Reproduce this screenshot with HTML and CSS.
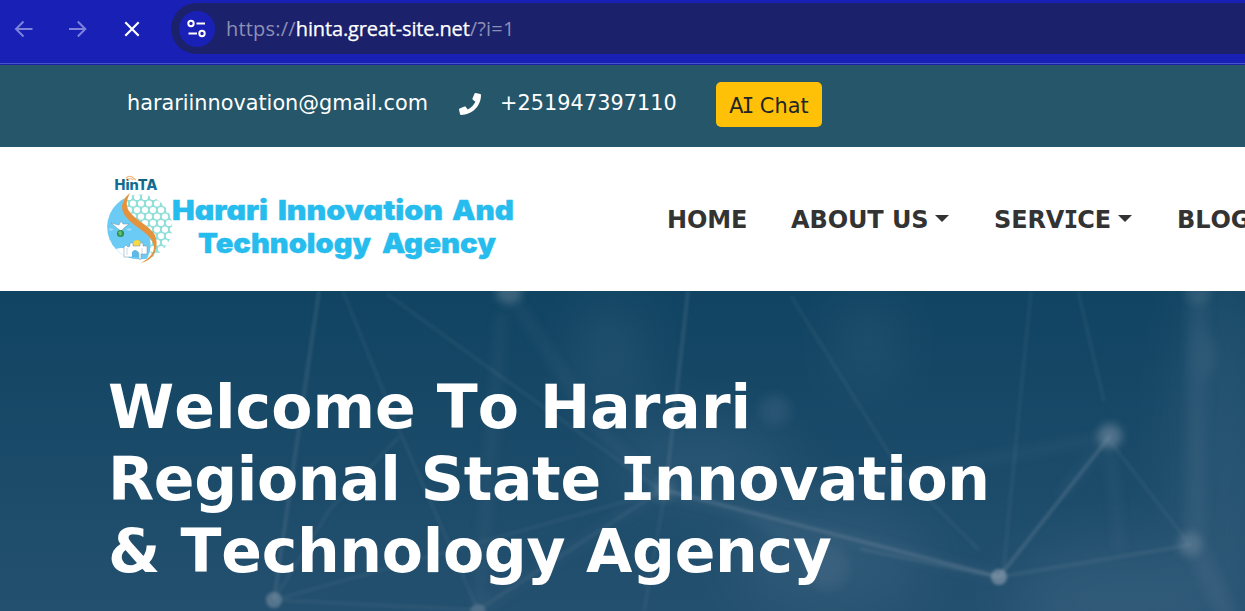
FILE: index.html
```html
<!DOCTYPE html>
<html lang="en">
<head>
<meta charset="utf-8">
<title>Harari Innovation And Technology Agency</title>
<link rel="stylesheet" href="styles.css">
</head>
<body>
<div class="browser">
  <svg class="nav-icon dim" viewBox="0 0 20 20"><path d="M18.500 10H2.500M9.500 2.500L2 10l7.500 7.500"/></svg>
  <svg class="nav-icon dim" viewBox="0 0 20 20"><path d="M1 10H17M9.800 2.500l7.500 7.500l-7.500 7.500"/></svg>
  <svg class="nav-icon stop" viewBox="0 0 20 20"><path d="M3.300 3.300l13.400 13.400M16.700 3.300L3.300 16.700"/></svg>
  <div class="address">
    <span class="site-info"><svg viewBox="0 0 20 20"><circle cx="4" cy="4.500" r="2.700"/><path d="M9.500 4.500h8.500M1.500 14.500h8.500"/><circle cx="15" cy="14.500" r="2.700"/></svg></span>
    <span class="url">https://<b>hinta.great-site.net</b>/?i=1</span>
  </div>
</div>
<div class="topbar">
  <span class="email">harariinnovation@gmail.com</span>
  <svg class="phone" viewBox="0 0 512 512"><path d="M493.400 24.600l-104-24c-11.300-2.600-22.900 3.300-27.500 13.900l-48 112c-4.200 9.800-1.400 21.300 6.900 28l60.600 49.600c-36 76.700-98.900 140.500-177.200 177.200l-49.600-60.600c-6.800-8.300-18.200-11.100-28-6.900l-112 48C3.900 366.500-2 378.100.600 389.400l24 104C27.100 504.200 36.700 512 48 512c256.100 0 464-207.500 464-464 0-11.200-7.700-20.900-18.600-23.400z"/></svg>
  <span class="number">+251947397110</span>
  <button class="chat">A<span class="slab">I</span> Chat</button>
</div>
<header class="header">
  <svg class="logo" viewBox="104 172 414 96">
    <defs>
      <clipPath id="disc"><circle cx="139.700" cy="227" r="32.500"/></clipPath>
      <linearGradient id="mark" x2="0" y2="1"><stop stop-color="#0d5f68"/><stop offset="1" stop-color="#1878b8"/></linearGradient>
      <pattern id="cells" x="1" y="2" width="8" height="13" patternUnits="userSpaceOnUse"><rect width="8" height="13" fill="#8fdfd9"/><g fill="#fff"><circle cx="4" cy="6.500" r="3.100"/><circle cx="0" cy="0" r="3.100"/><circle cx="8" cy="0" r="3.100"/><circle cx="0" cy="13" r="3.100"/><circle cx="8" cy="13" r="3.100"/></g></pattern>
    </defs>
    <g clip-path="url(#disc)">
      <rect x="104" y="190" width="72" height="72" fill="url(#cells)"/>
      <path d="M104 190h24c-9 16-4 23 10 33 17 11 14 27 7 40h-41z" fill="#6ccbf5"/>
      <path d="M116 249q6-2 10 0l-2 10h24l4-14-4 20h-24z" fill="#fff"/>
    </g>
    <g fill="#fff" stroke="#6b93a5" stroke-width=".5">
      <path d="M111 223l8 2 2-4 2 3 6 0-5 4-3 3-4-3z"/>
      <circle cx="137" cy="244" r="4" fill="#f6d944" stroke="#c9a635" stroke-dasharray="1 1"/>
      <path d="M124 257v-10l2-2 2 2 2-1v-3h3v3h7v-3h3v3h4v8h-6v5h-2v-6q-3-4-6 0v4z"/>
      <path d="M127 255v-7M142 254v-6" fill="none" stroke="#9bb3bf"/>
    </g>
    <path d="M132 257v-5q3-4 6 0v5z" fill="#5fb9e6"/>
    <g fill="#a9e1fa"><ellipse cx="111" cy="229.500" rx="2" ry="1"/><ellipse cx="129" cy="229.500" rx="2.500" ry="1"/></g>
    <circle cx="120.500" cy="233.500" r="3.600" fill="#2c934f"/><path d="M118 232l3-1 1 3-2 2z" fill="#71bd71"/>
    <path d="M130 193c-10 8-10 18-3 25 9 11 25 15 27 29 0 7-6 12-13 16 15-4 18-17 14-28-5-9-20-15-26-24-4-6-2-12 1-18z" fill="#e5923f"/>
    <text class="logo-mark" x="114.500" y="190" textLength="43" lengthAdjust="spacingAndGlyphs">HinTA</text>
    <path d="M126 178q3-3 6-1l4 3M128 180q2-3 5 0" fill="none" stroke="#f3b476" stroke-width="1.100"/>
    <g class="logo-text">
      <text x="172" y="219.500" textLength="96" lengthAdjust="spacingAndGlyphs">Harari</text>
      <text x="278" y="219.500" textLength="165" lengthAdjust="spacingAndGlyphs">Innovation</text>
      <text x="452" y="219.500" textLength="62" lengthAdjust="spacingAndGlyphs">And</text>
      <text x="198" y="252.800" textLength="173" lengthAdjust="spacingAndGlyphs">Technology</text>
      <text x="382" y="252.800" textLength="114" lengthAdjust="spacingAndGlyphs">Agency</text>
    </g>
  </svg>
  <nav class="menu">
    <a>HOME</a>
    <a class="drop about">ABOUT US</a>
    <a class="drop service">SERV<span class="slab">I</span>CE</a>
    <a class="blog">BLOG</a>
  </nav>
</header>
<main class="hero">
  <svg class="network" viewBox="0 0 1245 320">
    <defs>
      <filter id="soft" x="-10%" y="-10%" width="120%" height="120%"><feGaussianBlur stdDeviation="1.500"/></filter>
      <filter id="wide" x="-30%" y="-30%" width="160%" height="160%"><feGaussianBlur stdDeviation="6"/></filter>
      <filter id="node" x="-30%" y="-30%" width="160%" height="160%"><feGaussianBlur stdDeviation="4"/></filter>
      <filter id="haze" x="-50%" y="-50%" width="200%" height="200%"><feGaussianBlur stdDeviation="28"/></filter>
    </defs>
    <g filter="url(#haze)" fill="#7894ad" opacity=".15">
      <ellipse cx="868" cy="50" rx="28" ry="50"/>
      <ellipse cx="830" cy="265" rx="100" ry="55"/>
      <ellipse cx="1120" cy="310" rx="110" ry="60"/>
      <ellipse cx="1225" cy="150" rx="45" ry="190"/>
      <ellipse cx="610" cy="60" rx="30" ry="60"/>
      <ellipse cx="700" cy="170" rx="90" ry="40"/>
    </g>
    <g filter="url(#wide)" stroke="#8296ad" fill="#8296ad" opacity=".15">
      <path d="M1198 0L1195 254L1230 330" stroke-width="20" fill="none" opacity=".8"/>
      <path d="M502 20L478 320M515 10L600 140L660 197M999 286L670 202M740 220L830 270" stroke-width="9" fill="none" opacity=".75"/>
      <ellipse cx="1202" cy="65" rx="13" ry="25"/>
      <circle cx="775" cy="119" r="15"/><circle cx="827" cy="276" r="22"/>
      <path d="M1110 145L800 205M1110 155L1120 260M478 319L660 200M1110 145L1060 205" stroke-width="8" fill="none" opacity=".7"/>
    </g>
    <g filter="url(#soft)" stroke="#91a2b4" fill="none" stroke-width="3.500">
      <path d="M319 0L274 309M688 0L666 196" opacity=".18"/>
      <path d="M343 0L399 139L478 319M387 3L500 85L660 199M274 309L330 218L399 146M274 309L478 319M274 309L620 212L660 200L478 319M666 196L644 320M1031 0L1003 283M791 5L900 180L979 259M1078 0L1104 110M1110 150L1190 254" opacity=".09"/>
      <path d="M664 199L999 286M999 286L1110 145" opacity=".24"/>
      <path d="M999 286L1190 254M999 286L860 258" opacity=".13"/>
    </g>
    <g filter="url(#soft)" fill="#91a1b3">
      <circle cx="274" cy="309" r="8" opacity=".45"/><circle cx="999" cy="286" r="8" opacity=".6"/>
      <circle cx="478" cy="321" r="8" opacity=".3"/>
    </g>
    <g fill="#91a1b3" filter="url(#node)">
      <circle cx="1110" cy="145" r="12" opacity=".45"/><circle cx="1190" cy="253" r="12" opacity=".3"/><circle cx="509" cy="0" r="13" opacity=".35"/><circle cx="664" cy="199" r="11" opacity=".22"/><circle cx="1198" cy="0" r="13" opacity=".15"/>
    </g>
  </svg>
  <h1><span class="line-wide">Welcome To Harari</span><br><span class="line-tight">Regional State <span class="slab">I</span>nnovation</span><br><span class="line-last">&amp; Technology Agency</span></h1>
</main>
</body>
</html>
```
FILE: styles.css
```css
* { box-sizing: border-box; }
body { margin: 0; width: 1245px; height: 611px; overflow: hidden; background: #fff; font-family: Verdana, "DejaVu Sans", sans-serif; font-kerning: none; }
.browser { height: 65px; background: #1920b6; border-bottom: 1px solid #1c22a6; box-shadow: inset 0 -1px #4353cf; display: flex; align-items: flex-start; padding-left: 14px; }
.nav-icon { flex: none; width: 20px; height: 20px; margin: 19px 34px 0 0; fill: none; stroke: #fff; stroke-width: 2; }
.dim { stroke: #7d82dc; }
.stop { margin-right: 29px; stroke-width: 2.2; }
.address { flex: 1; height: 51px; margin-top: 3px; border-radius: 26px 0 0 26px; background: #1c216b; display: flex; align-items: center; padding-left: 8px; }
.site-info { width: 36px; height: 36px; border-radius: 50%; background: #1920b6; display: grid; place-items: center; }
.site-info svg { width: 20px; height: 20px; fill: none; stroke: #fff; stroke-width: 2; }
.url { margin-left: 11px; font: 20px/28px "Open Sans", sans-serif; color: #8d90b5; white-space: nowrap; letter-spacing: .2px; }
.url b { color: #fff; font-weight: 400; letter-spacing: -.15px; -webkit-text-stroke: .25px #fff; }
.url { font-kerning: auto; }
.topbar { height: 82px; background: #255669; color: #fff; display: flex; align-items: flex-start; padding-left: 127px; font-size: 20.8px; line-height: 31px; }
.email { width: 332px; padding-top: 23px; }
.phone { width: 22px; height: 22px; margin: 28px 19px 0 0; fill: #fff; }
.number { width: 216px; padding-top: 23px; letter-spacing: .05px; }
.chat { width: 106px; height: 45px; margin-top: 17px; padding: 4px 0 0; border: 0; border-radius: 5px; background: #ffc107; color: #212529; font: 20.8px/31px Verdana, "DejaVu Sans", sans-serif; letter-spacing: .1px; }
.slab { font-family: "DejaVu Sans Mono", monospace; margin: 0 -.09em; }
.chat .slab { margin: 0 -.06em 0 -.09em; }
.header { height: 144px; background: #fff; display: flex; padding-left: 104px; }
.logo { flex: none; width: 414px; height: 96px; margin-top: 25px; }
.logo-mark { font: 800 14.5px Inter, sans-serif; fill: url(#mark); }
.logo-text { font: 900 27.5px Inter, sans-serif; font-feature-settings: "cv11", "ss03"; fill: #26bcee; stroke: #26bcee; stroke-width: .4px; }
.menu { display: flex; margin-left: 149px; padding-top: 55px; color: #333; font-size: 24px; line-height: 36px; font-weight: 700; white-space: nowrap; letter-spacing: -.1px; }
.menu a { flex: none; width: 124px; }
.menu .about { width: 203px; }
.menu .service { width: 183px; }
.menu .slab, h1 .slab { margin: 0 -.028em; }
.drop::after { content: ""; display: inline-block; margin-left: 7px; vertical-align: 6px; border: 7px solid transparent; border-top-color: #333; border-bottom: 0; }
.hero { position: relative; height: 320px; background: linear-gradient(#104462, #24506f); overflow: hidden; }
.network { position: absolute; inset: 0; width: 1245px; height: 320px; }
h1 { position: relative; margin: 0; padding: 80px 0 0 108px; font-size: 60px; line-height: 72px; color: #fff; white-space: nowrap; }
.line-wide { letter-spacing: .05px; }
.line-tight { letter-spacing: -.38px; }
.line-last { letter-spacing: -.3px; }
```
